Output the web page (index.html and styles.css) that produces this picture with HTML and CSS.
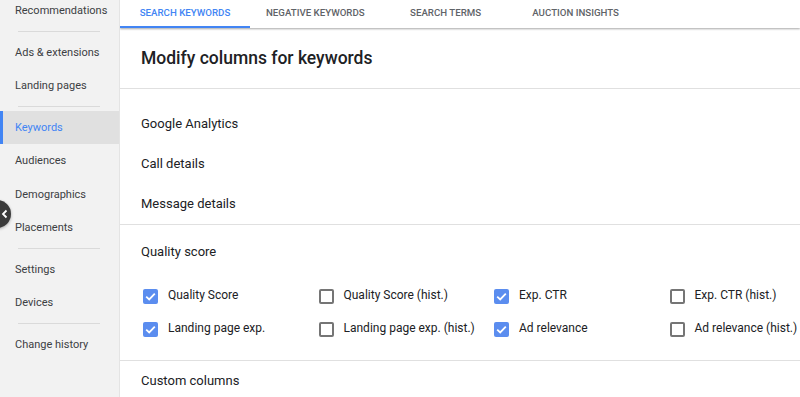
FILE: index.html
```html
<!DOCTYPE html>
<html lang="en">
<head>
  <meta charset="UTF-8" />
  <title>Modify columns for keywords</title>
  <link rel="stylesheet" href="styles.css">
</head>
<body>
  <div class="page">
    <nav class="sidebar">
      <ul class="menu">
        <li class="item">Recommendations</li>
        <li class="sep"></li>
        <li class="item">Ads &amp; extensions</li>
        <li class="item">Landing pages</li>
        <li class="sep"></li>
        <li class="item active">Keywords</li>
        <li class="item">Audiences</li>
        <li class="item">Demographics</li>
        <li class="item">Placements</li>
        <li class="sep"></li>
        <li class="item">Settings</li>
        <li class="item">Devices</li>
        <li class="sep"></li>
        <li class="item">Change history</li>
      </ul>
    </nav>
    <button class="collapse" aria-label="Collapse">
      <svg width="10" height="10" viewBox="0 0 10 10">
        <path d="M6.5 1.5 L3 5 L6.5 8.5" fill="none" stroke="#fff" stroke-width="1.8" />
      </svg>
    </button>

    <main class="main">
      <div class="tabs">
        <div class="tab active">Search keywords</div>
        <div class="tab">Negative keywords</div>
        <div class="tab">Search terms</div>
        <div class="tab">Auction insights</div>
      </div>

      <div class="panel">
        <h1 class="title">Modify columns for keywords</h1>

        <section class="group first">
          <div class="row">Google Analytics</div>
          <div class="row">Call details</div>
          <div class="row">Message details</div>
        </section>

        <section class="group quality">
          <div class="row">Quality score</div>
          <div class="checks">
            <label class="check"><span class="box on"></span>Quality Score</label>
            <label class="check"><span class="box"></span>Quality Score (hist.)</label>
            <label class="check"><span class="box on"></span>Exp. CTR</label>
            <label class="check"><span class="box"></span>Exp. CTR (hist.)</label>
            <label class="check"><span class="box on"></span>Landing page exp.</label>
            <label class="check"><span class="box"></span>Landing page exp. (hist.)</label>
            <label class="check"><span class="box on"></span>Ad relevance</label>
            <label class="check"><span class="box"></span>Ad relevance (hist.)</label>
          </div>
        </section>

        <section class="group">
          <div class="row">Custom columns</div>
        </section>
      </div>
    </main>
  </div>
</body>
</html>
```

FILE: styles.css
```css
* {
  box-sizing: border-box;
  font-family: Roboto, 'Liberation Sans', sans-serif;
}
body {
  margin: 0;
  width: 800px;
  height: 397px;
  overflow: hidden;
  background: #fff;
}
.page {
  position: relative;
  display: flex;
  height: 397px;
  overflow: hidden;
}
.sidebar {
  width: 120px;
  flex: none;
  background: #f2f2f2;
  border-right: 1px solid #e4e4e4;
}
.menu {
  list-style: none;
  margin: -5.75px 0 0;
  padding: 0;
}
.item {
  height: 33.5px;
  line-height: 33.5px;
  padding-left: 15px;
  font-size: 11px;
  color: #3c4043;
  white-space: nowrap;
}
.item.active {
  background: #e0e0e0;
  color: #4285f4;
  box-shadow: inset 3px 0 0 #4285f4;
}
.sep {
  height: 1px;
  margin: 3px 19px 4px 18px;
  background: #dadada;
}
.collapse {
  position: absolute;
  left: -17px;
  top: 200px;
  width: 28px;
  height: 28px;
  border: none;
  border-radius: 50%;
  background: #3a3a3a;
  padding: 0 0 0 17px;
  display: flex;
  align-items: center;
  box-shadow: 0 1px 3px rgba(0,0,0,0.3);
  z-index: 2;
}
.main {
  flex: 1;
  min-width: 0;
  display: flex;
  flex-direction: column;
  overflow: hidden;
}
.tabs {
  display: flex;
  height: 28px;
  flex: none;
  box-shadow: 0 1px 2px rgba(0,0,0,0.35);
  position: relative;
  z-index: 1;
}
.tab {
  min-width: 130px;
  padding: 0 16px;
  text-align: center;
  line-height: 26px;
  font-size: 9.7px;
  font-weight: 500;
  text-transform: uppercase;
  color: #5f6368;
  border-bottom: 2px solid transparent;
}
.tab.active {
  color: #4285f4;
  border-bottom-color: #4285f4;
}
.panel {
  flex: 1;
}
.title {
  margin: 0;
  height: 61px;
  line-height: 61px;
  padding-left: 21px;
  font-size: 17.5px;
  font-weight: 500;
  color: #202124;
  border-bottom: 1px solid #e0e0e0;
}
.group {
  border-bottom: 1px solid #e0e0e0;
  padding-left: 21px;
}
.group.first {
  padding: 15px 0 0 21px;
}
.group.quality {
  padding-top: 7px;
  padding-bottom: 15px;
}
.row {
  height: 40px;
  line-height: 40px;
  font-size: 13px;
  color: #202124;
}
.checks {
  display: grid;
  grid-template-columns: repeat(4, 175.5px);
  grid-auto-rows: 33.5px;
  padding-top: 6px;
}
.check {
  display: flex;
  align-items: center;
  gap: 10px;
  padding-left: 2px;
  font-size: 12px;
  color: #202124;
  white-space: nowrap;
}
.box {
  width: 15px;
  height: 15px;
  flex: none;
  border: 2px solid #757575;
  border-radius: 2px;
  margin-top: 3px;
}
.box.on {
  border: none;
  background: #5b8def url("data:image/svg+xml;utf8,<svg xmlns='http://www.w3.org/2000/svg' viewBox='0 0 15 15'><path d='M3.2 7.6 L6.2 10.4 L11.8 4.6' fill='none' stroke='white' stroke-width='1.8'/></svg>") no-repeat center;
}
```
